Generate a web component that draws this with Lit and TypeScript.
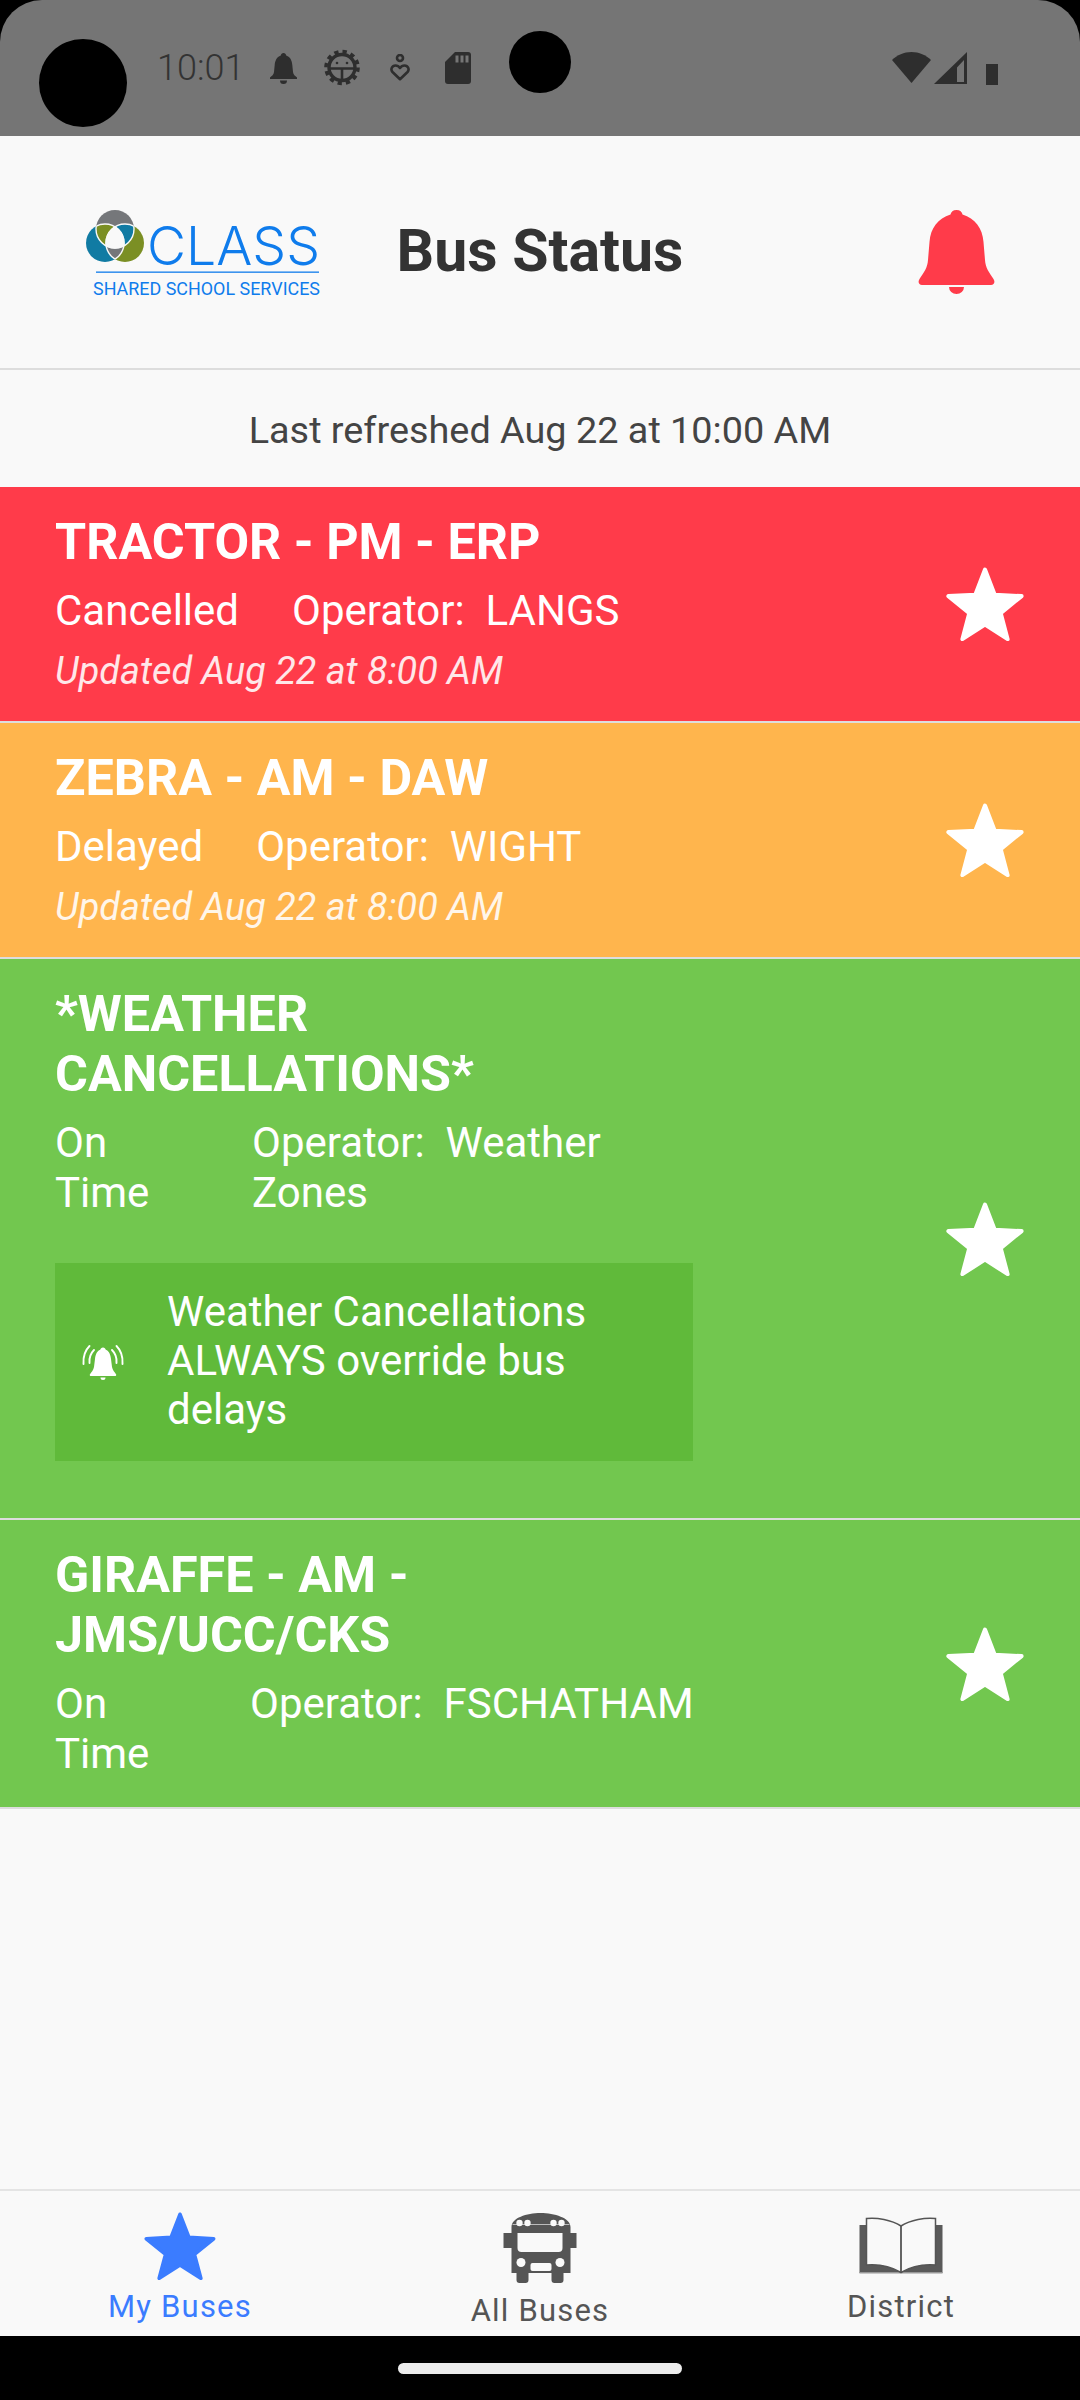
import { LitElement, html, css } from "lit";
import { customElement } from "lit/decorators.js";

const starPts = (() => {
  const pts: string[] = [];
  for (let i = 0; i < 10; i++) {
    const r = i % 2 ? 16.5 : 38.5;
    const a = (-90 + i * 36) * Math.PI / 180;
    pts.push(`${(39 + r * Math.cos(a)).toFixed(2)},${(41 + r * Math.sin(a)).toFixed(2)}`);
  }
  return pts.join(" ");
})();

const star = (cls: string) => html`<svg class=${cls} viewBox="0 0 78 74"><polygon points=${starPts} fill="currentColor" stroke="currentColor" stroke-width="4" stroke-linejoin="round"/></svg>`;

const logo = html`<svg class="logo" viewBox="0 0 240 90" width="240" height="90">
  <defs>
    <clipPath id="cT"><circle cx="30" cy="19" r="19"/></clipPath>
    <clipPath id="cL"><circle cx="20" cy="33" r="19"/></clipPath>
    <clipPath id="cR"><circle cx="40" cy="33" r="19"/></clipPath>
    <clipPath id="cTL" clip-path="url(#cT)"><circle cx="20" cy="33" r="19"/></clipPath>
  </defs>
  <circle cx="30" cy="19" r="19" fill="#75777a"/>
  <circle cx="20" cy="33" r="19" fill="#117ba3"/>
  <circle cx="40" cy="33" r="19" fill="#7b8f24"/>
  <circle cx="20" cy="33" r="19" fill="#7b8f24" clip-path="url(#cT)"/>
  <circle cx="40" cy="33" r="19" fill="#117ba3" clip-path="url(#cT)"/>
  <circle cx="40" cy="33" r="19" fill="#75777a" clip-path="url(#cL)"/>
  <circle cx="40" cy="33" r="19" fill="#f9f9f9" clip-path="url(#cTL)"/>
  <g fill="none" stroke="#f9f9f9" stroke-width="1.4">
    <circle cx="30" cy="19" r="19" clip-path="url(#cL)"/>
    <circle cx="30" cy="19" r="19" clip-path="url(#cR)"/>
    <circle cx="20" cy="33" r="19" clip-path="url(#cT)"/>
    <circle cx="40" cy="33" r="19" clip-path="url(#cT)"/>
    <circle cx="20" cy="33" r="19" clip-path="url(#cR)"/>
    <circle cx="40" cy="33" r="19" clip-path="url(#cL)"/>
  </g>
  <text x="62" y="54.500" textLength="173" lengthAdjust="spacingAndGlyphs" class="lg1">CLASS</text>
  <rect x="11" y="61.500" width="223" height="1.300" fill="#0f7cec"/>
  <text x="8" y="85" textLength="227" lengthAdjust="spacingAndGlyphs" class="lg2">SHARED SCHOOL SERVICES</text>
</svg>`;

const bellBig = html`<svg class="bell" viewBox="0 0 77 84"><path fill="currentColor" d="M38.5 0c-3.5 0-5.500 2-6 4.500C20 8.500 12.500 18 11.500 32L10 50C9.500 58 6 62 1.500 69-.5 72 1 75 4 75H73c3 0 4.500-3 2.500-6C71 62 67.500 58 67 50L65.500 32C64.500 18 57 8.500 44.500 4.500 44 2 42 0 38.500 0ZM31 77H46a7.500 7 0 0 1-15 0Z"/></svg>`;

const bellRing = html`<svg class="ring" viewBox="0 0 46 46"><g fill="none" stroke="#fff" stroke-width="1.900" stroke-linecap="round"><path d="M9.500 7C4.500 12 3 18 3.500 25"/><path d="M14 11C10.500 14.500 9 19 9.500 24"/><path d="M36.500 7C41.500 12 43 18 42.500 25"/><path d="M32 11C35.500 14.500 37 19 36.500 24"/></g><path fill="#fff" d="M23 8.500c-1.500 0-2.500 1-2.800 2.300C17 12 15.500 15.500 15 20L14 28C13.500 31 11.500 33 10 35.200 9.400 36 10 37 11 37H35C36 37 36.600 36 36 35.200 34.500 33 32.500 31 32 28L31 20C30.500 15.500 29 12 25.800 10.800 25.500 9.500 24.500 8.500 23 8.500ZM20.500 38.500H25.500A2.500 2.500 0 0 1 20.500 38.500Z"/></svg>`;

const busIcon = html`<svg class="bus-svg" viewBox="24 12 73 70">
  <path fill="#555" d="M32 32V26C32 17 47 12 61 12S91 17 91 26V32H97V47H91V72H84V79Q84 82 81 82H75Q72 82 72 79V72H49V79Q49 82 46 82H40Q37 82 37 79V72H32V47H24V32Z"/>
  <path fill="none" stroke="#bbb" stroke-width="1" d="M33 23.500H90"/>
  <g fill="#f9f9f9">
    <path d="M38 32H83V47Q83 51 79 51H42Q38 51 38 47Z"/>
    <circle cx="40" cy="22" r="3.200"/><circle cx="48" cy="22" r="3.200"/><circle cx="74" cy="22" r="3.200"/><circle cx="82" cy="22" r="3.200"/>
    <circle cx="41.500" cy="61.500" r="4.500"/><circle cx="80.500" cy="61.500" r="4.500"/>
    <rect x="51" y="62" width="21" height="8" rx="2"/>
  </g>
</svg>`;

const bookIcon = html`<svg class="book-svg" viewBox="20 17 84 57">
  <rect x="20.500" y="25" width="83" height="48" fill="#5a5a5a"/>
  <rect x="20.500" y="72" width="83" height="1.500" fill="#999"/>
  <path fill="#f9f9f9" stroke="#555" stroke-width="1.500" d="M62 26C52 19.500 38 17.500 27.500 18.500V65C40 64 52 66.500 62 72.500 72 66.500 84 64 96.500 65V18.500C86 17.500 72 19.500 62 26Z"/>
  <path stroke="#555" stroke-width="1.800" d="M62 26V72.500"/>
</svg>`;

const statusIcons = html`
  <svg class="si sb-bell" viewBox="0 0 27 31"><path fill="#2e2e2e" d="M13.500 0c-1.500 0-2.500 1-2.700 2.500C6.500 4 5 8 4.700 12L4 19c-.3 2.500-2 4-4 5.500V26H27v-1.500c-2-1.500-3.700-3-4-5.500l-.7-7c-.3-4-1.800-8-6.100-9.500C16 1 15 0 13.500 0ZM10 27.500h7a3.500 3.500 0 0 1-7 0Z"/></svg>
  <svg class="si sb-gear" viewBox="0 0 36 37"><g fill="none" stroke="#2e2e2e"><circle cx="18" cy="18.500" r="16" stroke-width="3.600" stroke-dasharray="4.300 4.080"/><circle cx="18" cy="18.500" r="13" stroke-width="3.400"/><path stroke-width="2.600" d="M5 19.500H31M18 19.500V31"/></g><circle cx="13" cy="14" r="1.300" fill="#2e2e2e"/><circle cx="23" cy="14" r="1.300" fill="#2e2e2e"/></svg>
  <svg class="si sb-heart" viewBox="0 0 20 27"><g fill="none" stroke="#2e2e2e" stroke-width="2.600"><circle cx="10" cy="4" r="3"/><path stroke-linejoin="round" d="M10 25.200 2.500 18C.2 15.500 2 11.500 5.500 11.500 7.500 11.500 9 12.500 10 14 11 12.500 12.500 11.500 14.500 11.500 18 11.500 19.800 15.500 17.500 18Z"/></g></svg>
  <svg class="si sb-sd" viewBox="0 0 26 32"><path fill="#2e2e2e" d="M10 0H23Q26 0 26 3V29Q26 32 23 32H3Q0 32 0 29V10Z"/><g fill="#757575"><rect x="10.500" y="3.500" width="3" height="7"/><rect x="15.500" y="3.500" width="3" height="7"/><rect x="20.500" y="3.500" width="3" height="7"/></g></svg>
`;

const rightIcons = html`
  <svg class="si sb-wifi" viewBox="0 0 39 31"><path fill="#2e2e2e" d="M0 8C5 3 12 0 19.500 0S34 3 39 8L19.500 31Z"/></svg>
  <svg class="si sb-signal" viewBox="0 0 33 32"><path fill="#2e2e2e" fill-rule="evenodd" d="M33 0V32H0ZM30 8 23 15.500V30H30Z"/></svg>
  <svg class="si bat" viewBox="0 0 12 21"><rect width="12" height="21" fill="#2e2e2e"/></svg>
`;

interface Bus { color: string; title: string[]; status: string[]; statusWidth?: number; op: string; updated?: string; banner?: boolean; }

const buses: Bus[] = [
  { color: "#ff3b4a", title: ["TRACTOR - PM - ERP"], status: ["Cancelled"], op: "LANGS", updated: "Updated Aug 22 at 8:00 AM" },
  { color: "#ffb54d", title: ["ZEBRA - AM - DAW"], status: ["Delayed"], op: "WIGHT", updated: "Updated Aug 22 at 8:00 AM" },
  { color: "#72c74f", title: ["*WEATHER", "CANCELLATIONS*"], status: ["On", "Time"], statusWidth: 144, op: "Weather Zones", banner: true },
  { color: "#72c74f", title: ["GIRAFFE - AM -", "JMS/UCC/CKS"], status: ["On", "Time"], statusWidth: 142, op: "FSCHATHAM" },
];

@customElement("app-root")
export class AppRoot extends LitElement {
  static styles = css`
    :host { display: flex; flex-direction: column; width: 1080px; height: 2400px; background: #000; font-family: Roboto, "Noto Sans", sans-serif; overflow: hidden; position: relative; }
    .statusbar { height: 136px; flex: none; background: #757575; border-radius: 42px 42px 0 0; display: flex; align-items: flex-start; box-sizing: border-box; padding: 49px 82px 0 157px; position: relative; }
    .left, .right { display: flex; align-items: flex-start; }
    .right { margin-left: auto; padding-top: 3px; }
    .time { font-size: 36px; font-weight: 300; color: #333; line-height: 38px; width: 90px; white-space: nowrap; }
    .si { display: block; flex: none; }
    .sb-bell { width: 27px; height: 31px; margin: 4px 0 0 23px; }
    .sb-gear { width: 36px; height: 37px; margin-left: 27px; }
    .sb-heart { width: 20px; height: 27px; margin: 5px 0 0 30px; }
    .sb-sd { width: 26px; height: 32px; margin: 3px 0 0 35px; }
    .sb-wifi { width: 39px; height: 31px; }
    .sb-signal { width: 33px; height: 32px; margin-left: 3px; }
    .bat { width: 12px; height: 21px; margin-left: 19px; margin-top: 12px; }
    .cam { position: absolute; border-radius: 50%; background: #000; }
    .cam1 { left: 39px; top: 39px; width: 88px; height: 88px; }
    .cam2 { left: 509px; top: 31px; width: 62px; height: 62px; }
    .main { flex: 1; background: #f9f9f9; display: flex; flex-direction: column; min-height: 0; }
    .header { flex: none; height: 234px; box-sizing: border-box; border-bottom: 2px solid #ddd; display: flex; align-items: center; justify-content: center; position: relative; }
    .logo { position: absolute; left: 85px; top: 74px; overflow: visible; }
    .lg1 { font: 300 54px Inter, "Liberation Sans", sans-serif; fill: #0f7cec; }
    .lg2 { font: 400 18px Roboto, "Liberation Sans", sans-serif; fill: #0f7cec; }
    h1 { margin: 0 0 2px; font-size: 59px; font-weight: 700; color: #333; line-height: 64px; }
    .bell { position: absolute; left: 918px; top: 74px; width: 77px; height: 84px; color: #ff3b4a; }
    .refreshed { flex: none; height: 117px; box-sizing: border-box; padding-top: 2px; display: flex; align-items: center; justify-content: center; font-size: 37.800px; color: #444; }
    .bus { flex: none; display: flex; align-items: center; border-bottom: 2px solid #ddd; color: #fff; box-sizing: border-box; padding: 0 56px 0 55px; }
    .info { width: 640px; flex: none; padding-top: 25px; }
    .title { font-size: 50.300px; font-weight: 700; line-height: 60px; }
    .line { display: flex; font-size: 42px; line-height: 50px; margin-top: 14px; }
    .status { flex: none; margin-right: 53px; }
    .op { flex: 1; white-space: pre-wrap; min-width: 0; }
    .upd { font-size: 37.800px; font-style: italic; font-weight: 400; line-height: 50px; margin: 10px 0 25px; opacity: .88; }
    .fav { width: 78px; height: 74px; margin-left: auto; flex: none; color: #fff; }
    .banner { display: flex; align-items: center; background: #60ba3a; height: 198px; margin-top: 45px; margin-bottom: 57px; margin-right: 2px; }
    .ring { width: 46px; height: 46px; flex: none; margin: 0 41px 0 25px; }
    .banner-text { font-size: 42px; line-height: 49px; width: 480px; margin-top: -3px; }
    .end { height: 28px; }
    .spacer { flex: 1; }
    .nav { flex: none; height: 147px; border-top: 2px solid #e4e4e4; display: grid; grid-template-columns: repeat(3, 360px); box-sizing: border-box; }
    .tab { display: flex; flex-direction: column; align-items: center; color: #555; font-size: 31px; letter-spacing: 1.200px; }
    .tab.on { color: #3b7cff; }
    .tab-star { width: 72px; height: 68px; margin-top: 21px; }
    .tab span { line-height: 34px; }
    .t1 span { margin-top: 10px; }
    .bus-svg { width: 74px; height: 70px; margin-top: 22px; }
    .t2 span { margin-top: 11px; }
    .book-svg { width: 84px; height: 57px; margin-top: 26px; }
    .t3 { padding-left: 2px; }
    .t3 span { margin-top: 16px; }
    .gesture { flex: none; height: 64px; background: #000; display: flex; justify-content: center; padding-top: 27px; box-sizing: border-box; }
    .pill { width: 284px; height: 11px; border-radius: 6px; background: #ececec; }
  `;

  private renderBus(b: Bus) {
    return html`<div class="bus" style="background:${b.color}">
      <div class="info">
        <div class="title">${b.title.map((t) => html`<div>${t}</div>`)}</div>
        <div class="line">
          <div class="status" style=${b.statusWidth ? `width:${b.statusWidth}px` : ""}>${b.status.map((t) => html`<div>${t}</div>`)}</div>
          <div class="op">Operator:  ${b.op}</div>
        </div>
        ${b.updated ? html`<div class="upd">${b.updated}</div>` : ""}
        ${b.banner ? html`<div class="banner">${bellRing}<div class="banner-text">Weather Cancellations ALWAYS override bus delays</div></div>` : ""}
        ${!b.updated && !b.banner ? html`<div class="end"></div>` : ""}
      </div>
      ${star("fav")}
    </div>`;
  }

  render() {
    return html`
      <div class="statusbar">
        <div class="left"><div class="time">10:01</div>${statusIcons}</div>
        <div class="right">${rightIcons}</div>
        <div class="cam cam1"></div><div class="cam cam2"></div>
      </div>
      <div class="main">
        <div class="header">${logo}<h1>Bus Status</h1>${bellBig}</div>
        <div class="refreshed">Last refreshed Aug 22 at 10:00 AM</div>
        ${buses.map((b) => this.renderBus(b))}
        <div class="spacer"></div>
        <div class="nav">
          <div class="tab t1 on">${star("tab-star")}<span>My Buses</span></div>
          <div class="tab t2">${busIcon}<span>All Buses</span></div>
          <div class="tab t3">${bookIcon}<span>District</span></div>
        </div>
      </div>
      <div class="gesture"><div class="pill"></div></div>
    `;
  }
}
